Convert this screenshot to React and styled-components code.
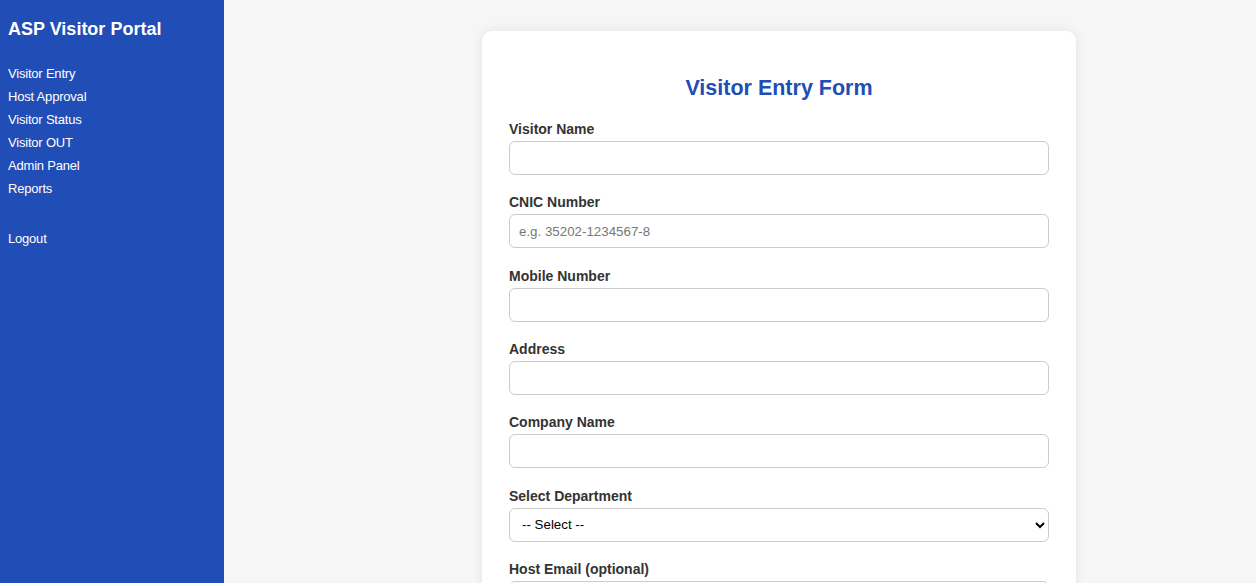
import React from "react";
import styled, {createGlobalStyle} from "styled-components";

const GlobalStyle = createGlobalStyle`
  html, body {
    margin: 0;
    padding: 0;
    height: 100%;
    overflow: hidden;
  }
  body {
    font-family: "Liberation Sans", Arial, sans-serif;
    background: #f6f6f6;
  }
`;

const Layout = styled.div`
  display: flex;
  min-height: 583px;
`;

const Sidebar = styled.aside`
  width: 224px;
  flex-shrink: 0;
  background: #214db6;
  color: #fff;
  padding: 19px 8px;
  box-sizing: border-box;
  h2 {
    margin: 0 0 22px;
    font-size: 18px;
    font-weight: 700;
  }
  ul {
    list-style: none;
    margin: 0;
    padding: 0;
  }
  li {
    font-size: 13px;
    line-height: 23px;
    letter-spacing: -0.2px;
  }
`;

const NavItem = styled.li`
  margin-top: ${(p) => (p.$gap ? "27px" : "0")};
`;

const Main = styled.main`
  flex: 1;
  display: flex;
  justify-content: center;
  align-items: flex-start;
  padding: 31px 0 0 78px;
`;

const Card = styled.div`
  width: 594px;
  box-sizing: border-box;
  background: #fff;
  border-radius: 10px;
  box-shadow: 0 0 12px rgba(0, 0, 0, 0.08);
  padding: 45px 27px 30px;
`;

const Title = styled.h2`
  margin: 0 0 20px;
  text-align: center;
  color: #214db6;
  font-size: 21.5px;
  font-weight: 700;
`;

const Field = styled.div`
  margin-bottom: 19.33px;
  label {
    display: block;
    font-size: 14px;
    line-height: 16px;
    font-weight: 700;
    color: #333;
    margin-bottom: 4px;
  }
`;

const Input = styled.input`
  width: 100%;
  height: 34px;
  box-sizing: border-box;
  border: 1px solid #ccc;
  border-radius: 6px;
  padding: 0 9px;
  font-size: 13.33px;
  font-family: "Liberation Sans", Arial, sans-serif;
  &::placeholder {
    color: #777;
  }
`;

const Select = styled.select`
  width: 100%;
  height: 34px;
  box-sizing: border-box;
  border: 1px solid #ccc;
  border-radius: 6px;
  padding: 0 8px;
  font-size: 13.33px;
  background: #fff;
  color: #000;
  font-family: "Liberation Sans", Arial, sans-serif;
`;

const navLinks = ["Visitor Entry", "Host Approval", "Visitor Status", "Visitor OUT", "Admin Panel", "Reports"];

export default function App() {
  return (
    <>
      <GlobalStyle />
      <Layout>
        <Sidebar>
          <h2>ASP Visitor Portal</h2>
          <ul>
            {navLinks.map((n) => (
              <NavItem key={n}>{n}</NavItem>
            ))}
            <NavItem $gap>Logout</NavItem>
          </ul>
        </Sidebar>
        <Main>
          <Card>
            <Title>Visitor Entry Form</Title>
            <Field>
              <label>Visitor Name</label>
              <Input type="text" />
            </Field>
            <Field>
              <label>CNIC Number</label>
              <Input type="text" placeholder="e.g. 35202-1234567-8" />
            </Field>
            <Field>
              <label>Mobile Number</label>
              <Input type="text" />
            </Field>
            <Field>
              <label>Address</label>
              <Input type="text" />
            </Field>
            <Field>
              <label>Company Name</label>
              <Input type="text" />
            </Field>
            <Field>
              <label>Select Department</label>
              <Select defaultValue="">
                <option value="">-- Select --</option>
                <option>Admin</option>
                <option>IT</option>
              </Select>
            </Field>
            <Field>
              <label>Host Email (optional)</label>
              <Input type="email" />
            </Field>
          </Card>
        </Main>
      </Layout>
    </>
  );
}
